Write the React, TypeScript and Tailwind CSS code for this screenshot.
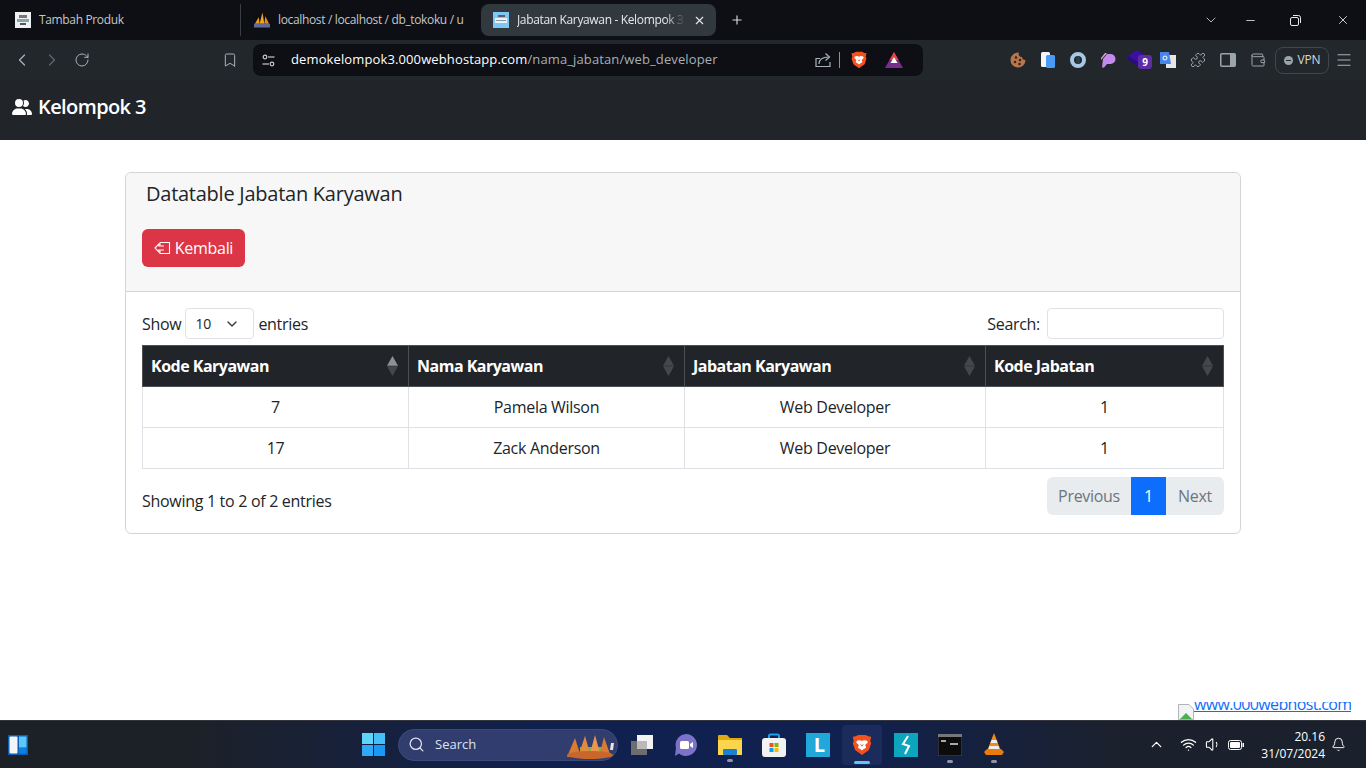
import { ChevronDown, ChevronLeft, ChevronRight, ChevronUp, Minus, Plus, RotateCw, X, Bookmark, Puzzle, Wallet, Menu, Search, Wifi, Volume1, Bell } from 'lucide-react';

const SortIcon = ({ up = false }: { up?: boolean }) => (
    <svg width="11" height="20" viewBox="0 0 11 20" className="absolute right-[10px] top-[10px]">
        <path d="M5.500 0 L11 9.700 H0 Z" fill={up ? '#8f9294' : '#44484c'} />
        <path d="M5.500 20 L11 10.300 H0 Z" fill="#44484c" />
    </svg>
);

const BraveIcon = ({ size = 18 }: { size?: number }) => (
    <svg width={size} height={size} viewBox="0 0 24 24">
        <path d="M5 2.500 L8 1 H16 L19 2.500 L22 3 L21 8 L22 10 L19.500 17.500 L12 23 L4.500 17.500 L2 10 L3 8 L2 3 Z" fill="#f4511e" />
        <path d="M7 7 L10 6.800 L12 7.600 L14 6.800 L17 7 L18.500 9 L15.500 12 L16.500 15 L13.500 16.500 L12 18 L10.500 16.500 L7.500 15 L8.500 12 L5.500 9 Z" fill="#fff" />
        <path d="M10 11 L12 14 L14 11 L12 12 Z" fill="#f4511e" />
    </svg>
);

const FaviconPage = () => (
    <svg width="16" height="16" viewBox="0 0 16 16" className="shrink-0">
        <rect width="16" height="16" fill="#7cc7f5" />
        <rect x="2" y="6" width="12" height="5" fill="#e8f1f7" />
        <rect x="5" y="3" width="7" height="2" fill="#55606c" />
        <rect x="3" y="8" width="10" height="1" fill="#7f99ac" />
    </svg>
);

const FaviconGray = () => (
    <svg width="16" height="16" viewBox="0 0 16 16" className="shrink-0">
        <rect width="16" height="16" fill="#eef0f1" />
        <rect x="4" y="3" width="8" height="3" fill="#777" />
        <rect x="2" y="7" width="12" height="3" fill="#8ba3a8" />
        <rect x="5" y="11" width="6" height="2" fill="#556" />
    </svg>
);

const FaviconPma = () => (
    <svg width="16" height="16" viewBox="0 0 17 16" className="shrink-0">
        <path d="M1 12 L5 5 L6 12 Z" fill="#f29a1d" />
        <path d="M6 12 L9 0 L11 12 Z" fill="#f2a32a" />
        <path d="M11 12 L12 4 L16 12 Z" fill="#e88a14" />
        <rect x="0" y="12" width="17" height="4" fill="#5d6a9a" />
    </svg>
);

const Tabs = () => (
    <div className="flex h-[40px] items-center bg-[#0d0f14] text-[12px] tracking-[-0.35px] text-[#c4c7c9]">
        <div className="flex h-[32px] w-[241px] items-center gap-[8px] border-r border-[#3a3d42] pl-[15px]">
            <FaviconGray />
            <span>Tambah Produk</span>
        </div>
        <div className="flex h-[32px] w-[240px] items-center gap-[8px] overflow-hidden pl-[13px] pr-[14px] whitespace-nowrap">
            <FaviconPma />
            <span>localhost / localhost / db_tokoku / u</span>
        </div>
        <div className="flex h-[32px] w-[235px] items-center gap-[8px] rounded-lg bg-[#32393e] pl-[12px] pr-[10px] text-[#e6e8e9]">
            <FaviconPage />
            <span className="flex-1 overflow-hidden whitespace-nowrap [mask-image:linear-gradient(90deg,#000_88%,transparent)]">Jabatan Karyawan - Kelompok 3</span>
            <X size={13} strokeWidth={2} className="shrink-0" />
        </div>
        <Plus size={14} strokeWidth={2} className="ml-[14px] text-[#d6d8da]" />
        <div className="ml-auto flex items-center text-[#e8e9ea]">
            <ChevronDown size={16} strokeWidth={1.500} className="mr-[25px] text-[#aeb6ba]" />
            <Minus size={13} strokeWidth={1.500} className="mr-[33px]" />
            <svg width="11" height="11" viewBox="0 0 11 11" fill="none" stroke="currentColor" className="mr-[35px]">
                <rect x="0.5" y="2.500" width="8" height="8" rx="1.500" />
                <path d="M3 0.500 H8.500 A2 2 0 0 1 10.500 2.500 V8" />
            </svg>
            <X size={14} strokeWidth={1.500} className="mr-[16px]" />
        </div>
    </div>
);

const Extensions = () => (
    <div className="flex items-center">
        <div className="flex w-[30px] justify-center">
            <svg width="16" height="16" viewBox="0 0 16 16">
                <path d="M9 0.600 A7.500 7.500 0 1 0 15.500 8 A3 3 0 0 1 12 5 A3 3 0 0 1 9 0.600 Z" fill="#b8764d" />
                <circle cx="6" cy="5.500" r="1.300" fill="#3b2315" />
                <circle cx="10" cy="8" r="1.300" fill="#3b2315" />
                <circle cx="5" cy="10" r="1.300" fill="#3b2315" />
                <circle cx="9.500" cy="12" r="1.300" fill="#3b2315" />
            </svg>
        </div>
        <div className="flex w-[30px] justify-center">
            <svg width="14" height="16" viewBox="0 0 14 16">
                <rect x="0" y="0" width="9" height="15" rx="1.500" fill="#f5f6f7" />
                <rect x="5" y="3" width="9" height="13" rx="1.500" fill="#4a9bf5" />
            </svg>
        </div>
        <div className="flex w-[30px] justify-center">
            <svg width="16" height="16" viewBox="0 0 16 16">
                <circle cx="8" cy="8" r="6" fill="none" stroke="#a8c8e4" strokeWidth="4" />
                <ellipse cx="8" cy="8" rx="2" ry="4" fill="#2c3f50" />
            </svg>
        </div>
        <div className="flex w-[30px] justify-center">
            <svg width="15" height="15" viewBox="0 0 15 15">
                <path d="M2 6 L6 1 H9.500 A5 5 0 0 1 9.500 11 H6 L3 14.500 H1 Z" fill="#c58af0" />
                <path d="M0 5 L4 0 H6 L0 7 Z" fill="#f0a0c8" />
            </svg>
        </div>
        <div className="relative flex w-[30px] justify-center">
            <svg width="18" height="16" viewBox="0 0 18 16" className="-mt-[4px] -ml-[2px]">
                <path d="M9 0 L18 6 L9 12 L0 6 Z" fill="#3b0fa0" />
                <path d="M0 6 L9 12 V16 L0 10 Z" fill="#2c0b80" />
            </svg>
            <span className="absolute left-[15px] top-[1px] flex h-[14px] w-[14px] items-center justify-center rounded-[3px] bg-[#5e2ca5] text-[10px] font-bold leading-none text-white">9</span>
        </div>
        <div className="flex w-[30px] justify-center">
            <svg width="16" height="16" viewBox="0 0 16 16">
                <rect x="6" y="3" width="10" height="13" fill="#e6e6e6" />
                <path d="M0 0 H9 L11 12 H0 Z" fill="#4a86e8" />
                <circle cx="5" cy="6" r="2" fill="none" stroke="#fff" strokeWidth="1" />
            </svg>
        </div>
        <div className="flex w-[30px] justify-center text-[#9aa5ab]">
            <Puzzle size={16} strokeWidth={1.500} />
        </div>
        <div className="flex w-[30px] justify-center">
            <svg width="16" height="14" viewBox="0 0 16 14" fill="none">
                <rect x="0.750" y="0.750" width="14.500" height="12.500" rx="1" stroke="#9aa5ab" strokeWidth="1.500" />
                <rect x="10" y="1" width="5" height="12" fill="#9aa5ab" />
            </svg>
        </div>
        <div className="flex w-[30px] justify-center text-[#9aa5ab]">
            <Wallet size={16} strokeWidth={1.500} />
        </div>
    </div>
);

const Toolbar = () => (
    <div className="flex h-[40px] items-center bg-[#22272b] text-[#a9b2b7]">
        <ChevronLeft size={20} strokeWidth={1.500} className="ml-[12px]" />
        <ChevronRight size={20} strokeWidth={1.500} className="ml-[10px] text-[#5f676c]" />
        <RotateCw size={16} strokeWidth={1.500} className="ml-[12px]" />
        <Bookmark size={16} strokeWidth={1.500} className="ml-[132px]" />
        <div className="ml-[15px] flex h-[32px] w-[670px] items-center rounded-lg bg-[#0d0f14] pl-[9px] pr-[20px] text-[13px]">
            <svg width="13" height="13" viewBox="0 0 13 13" fill="none" stroke="#c7cbce" strokeWidth="1.200">
                <circle cx="3" cy="3" r="1.800" />
                <path d="M6 3 H12.500" />
                <circle cx="10" cy="10" r="1.800" />
                <path d="M0.500 10 H7" />
            </svg>
            <span className="ml-[16px] tracking-[0.12px] text-white">demokelompok3.000webhostapp.com<span className="text-[#a7afb4]">/nama_jabatan/web_developer</span></span>
            <svg width="16" height="16" viewBox="0 0 16 16" fill="none" stroke="#a9b2b7" strokeWidth="1.200" className="ml-auto">
                <path d="M15 10 V14.500 H1 V6.500 H5" />
                <path d="M4 12 C4 7.500 7.500 5 13.500 5" />
                <path d="M10.500 1.500 L14.500 5 L10.500 8.500" />
            </svg>
            <div className="ml-[8px] h-[16px] w-px bg-[#8a9297]" />
            <div className="ml-[10px] flex"><BraveIcon /></div>
            <svg width="18" height="16" viewBox="0 0 18 16" className="ml-[17px]">
                <path d="M9 0 L18 16 H0 Z" fill="#7b2d8e" />
                <path d="M9 0 L13.500 8 H4.500 Z" fill="#e2483a" />
                <path d="M9 5 L12.500 11 H5.500 Z" fill="#fff" />
            </svg>
        </div>
        <div className="ml-[80px] flex items-center">
            <Extensions />
        </div>
        <div className="ml-[2px] flex h-[27px] w-[54px] items-center justify-center gap-[5px] rounded-lg border border-[#3f474c] text-[12px] tracking-[-0.2px] text-[#d5d9db]">
            <span className="flex h-[9px] w-[9px] items-center justify-center rounded-full bg-[#9aa5ab]">
                <span className="h-px w-[5px] bg-[#22272b]" />
            </span>
            VPN
        </div>
        <Menu size={18} strokeWidth={1.500} className="ml-[6px]" />
    </div>
);

const Navbar = () => (
    <div className="flex h-[60px] items-center bg-[#212529] pl-[12px] pb-[6px]">
        <svg width="20" height="16" viewBox="0 0 640 512" fill="#fff">
            <path d="M96 128a128 128 0 1 1 256 0A128 128 0 1 1 96 128zM0 482.300C0 383.800 79.800 304 178.300 304h91.400C368.200 304 448 383.800 448 482.300c0 16.400-13.300 29.700-29.700 29.700H29.700C13.300 512 0 498.700 0 482.300zM609.300 512H471.400c5.400-9.400 8.600-20.300 8.600-32v-8c0-60.700-27.100-115.200-69.800-151.800c2.400-.1 4.700-.2 7.100-.2h61.400C567.800 320 640 392.200 640 481.300c0 17-13.800 30.700-30.700 30.700zM432 256c-31 0-59-12.600-79.300-32.900C372.400 196.500 384 163.600 384 128c0-26.800-6.600-52.100-18.300-74.300C384.300 40.100 407.200 32 432 32c61.900 0 112 50.100 112 112s-50.100 112-112 112z" />
        </svg>
        <span className="ml-[6px] text-[20px] font-semibold tracking-[-0.6px] text-white">Kelompok 3</span>
    </div>
);

const rows = [
    { kode: 7, nama: 'Pamela Wilson', jabatan: 'Web Developer', kodeJabatan: 1 },
    { kode: 17, nama: 'Zack Anderson', jabatan: 'Web Developer', kodeJabatan: 1 },
];

const DataCard = () => (
    <div className="mx-auto mt-[32px] w-[1116px] rounded-md border border-[#d3d4d5] text-[16px] tracking-[-0.3px] text-[#212529]">
        <div className="h-[119px] rounded-t-md border-b border-[#d3d4d5] bg-[#f7f7f7] px-[16px]">
            <h5 className="pl-[4px] pt-[9px] text-[20px] leading-[24px] font-medium tracking-[-0.25px]">Datatable Jabatan Karyawan</h5>
            <button className="mt-[23px] flex h-[38px] w-[103px] items-center justify-center gap-[4px] rounded-md bg-[#dc3545] text-white">
                <svg width="17" height="16" viewBox="0 0 17 16" fill="none" stroke="#fff" strokeWidth="1.100">
                    <path d="M6 2.500 H15.500 V13.500 H6 V10.500 M6 5.500 V2.500" />
                    <path d="M10 6 H5 V3.800 L1 8 L5 12.200 V10 H10" />
                </svg>
                Kembali
            </button>
        </div>
        <div className="px-[16px] pt-[16px]">
            <div className="flex h-[31px] items-center justify-between">
                <div className="flex items-center gap-[4px]">
                    <span>Show</span>
                    <div className="flex h-[31px] w-[69px] items-center justify-between rounded border border-[#dee2e6] pl-[9px] pr-[13px] text-[14px]">
                        10
                        <ChevronDown size={16} strokeWidth={2} className="text-[#343a40]" />
                    </div>
                    <span>entries</span>
                </div>
                <div className="flex items-center gap-[7px]">
                    <span>Search:</span>
                    <div className="h-[31px] w-[177px] rounded border border-[#dee2e6] bg-white" />
                </div>
            </div>
            <table className="mt-[6px] w-[1081px] table-fixed border-collapse">
                <thead className="bg-[#212529] text-white">
                    <tr className="h-[41px]">
                        {['Kode Karyawan', 'Nama Karyawan', 'Jabatan Karyawan', 'Kode Jabatan'].map((label, i) => (
                            <th
                                key={label}
                                className={`relative border border-[#4d5154] px-[8px] text-left font-bold tracking-[-0.5px] ${['w-[266px]', 'w-[276px]', 'w-[301px]', 'w-[238px]'][i]}`}
                            >
                                {label}
                                <SortIcon up={i === 0} />
                            </th>
                        ))}
                    </tr>
                </thead>
                <tbody>
                    {rows.map((row) => (
                        <tr key={row.kode} className="h-[41px] text-center">
                            <td className="border border-[#dee2e6]">{row.kode}</td>
                            <td className="border border-[#dee2e6]">{row.nama}</td>
                            <td className="border border-[#dee2e6]">{row.jabatan}</td>
                            <td className="border border-[#dee2e6]">{row.kodeJabatan}</td>
                        </tr>
                    ))}
                </tbody>
            </table>
            <div className="mt-[8px] flex items-start justify-between pb-[18px]">
                <span className="pt-[12px]">Showing 1 to 2 of 2 entries</span>
                <div className="flex h-[38px] overflow-hidden rounded-md text-[#6c757d]">
                    <div className="flex w-[84px] items-center justify-center bg-[#e9ecef]">Previous</div>
                    <div className="flex w-[35px] items-center justify-center bg-[#0d6efd] text-white">1</div>
                    <div className="flex w-[58px] items-center justify-center bg-[#e9ecef]">Next</div>
                </div>
            </div>
        </div>
    </div>
);

const Taskbar = () => (
    <div className="relative flex h-[48px] items-center border-t border-[#33373d] bg-[linear-gradient(90deg,#1c2128_0%,#1c2128_14%,#10204f_40%,#10204f_62%,#1b212c_82%,#1b212c_100%)] text-white">
        <svg width="20" height="20" viewBox="0 0 20 20" className="ml-[8px]">
            <rect width="20" height="20" fill="#0a5fb4" />
            <rect x="1.500" y="1.500" width="8" height="17" rx="1" fill="#f3f5f7" />
            <rect x="11" y="1.500" width="7.500" height="11" fill="#5cc8fa" />
            <rect x="11" y="13" width="7.500" height="5.500" fill="#0f80e0" />
        </svg>
        <svg width="23" height="23" viewBox="0 0 23 23" className="ml-[334px]">
            <rect width="11" height="11" fill="#5ed4fb" />
            <rect x="12" width="11" height="11" fill="#45bffa" />
            <rect y="12" width="11" height="11" fill="#2fa8f7" />
            <rect x="12" y="12" width="11" height="11" fill="#1a98f5" />
        </svg>
        <div className="relative ml-[13px] flex h-[32px] w-[220px] items-center rounded-full border border-[#3c4a7a] bg-[#303d6e] pl-[9px] text-[13px] text-[#dfe3ee]">
            <Search size={17} strokeWidth={1.800} />
            <span className="ml-[10px]">Search</span>
            <svg width="50" height="26" viewBox="0 0 50 26" className="absolute right-[1px] bottom-[1px]">
                <path d="M14 14 H38 V20 H14 Z" fill="#7cb342" />
                <path d="M1 24 L9 5 L15 24 Z" fill="#d97b32" />
                <path d="M12 24 L19 3 L25 24 Z" fill="#e28b3f" />
                <path d="M23 24 L29 2 L35 24 Z" fill="#ea9650" />
                <path d="M33 24 L38 4 L45 24 Z" fill="#d97b32" />
                <ellipse cx="24" cy="22" rx="23" ry="4" fill="#c9672a" />
                <path d="M45 10 L48 10 L47 17 L44 17 Z" fill="#f1e4d2" />
            </svg>
        </div>
        <div className="ml-[2px] flex items-center">
            <div className="flex w-[44px] justify-center">
                <svg width="24" height="22" viewBox="0 0 24 22">
                    <rect x="1" y="7" width="16" height="14" fill="#6d6d6d" />
                    <rect x="7" y="1" width="16" height="14" fill="#f2f2f2" />
                    <rect x="7" y="7" width="10" height="8" fill="#b9b9b9" />
                </svg>
            </div>
            <div className="flex w-[44px] justify-center">
                <svg width="24" height="24" viewBox="0 0 24 24">
                    <path d="M12 1 A11 11 0 1 1 5 20.500 L1 23 L2 15 A11 11 0 0 1 12 1 Z" fill="#7c72c8" />
                    <rect x="6" y="8" width="9" height="8" rx="1.500" fill="#fff" />
                    <path d="M16 11 L19 9 V15 L16 13 Z" fill="#fff" />
                </svg>
            </div>
            <div className="relative flex w-[44px] justify-center">
                <svg width="24" height="22" viewBox="0 0 24 22">
                    <path d="M0 2 A1 1 0 0 1 1 1 H9 L12 4 H24 V21 H0 Z" fill="#e3a712" />
                    <rect y="6" width="24" height="15" fill="#fbd54b" />
                    <rect x="5" y="15" width="14" height="6" rx="1" fill="#1a82d0" />
                </svg>
                <span className="absolute bottom-[-6px] h-[3px] w-[6px] rounded-full bg-[#8f96a6]" />
            </div>
            <div className="flex w-[44px] justify-center">
                <svg width="24" height="24" viewBox="0 0 24 24">
                    <path d="M7 6 V3 A1.500 1.500 0 0 1 8.500 1.500 H15.500 A1.500 1.500 0 0 1 17 3 V6" fill="none" stroke="#1aa4e8" strokeWidth="2" />
                    <rect y="5" width="24" height="19" rx="3" fill="#f2f2f2" />
                    <rect x="7.500" y="10" width="4" height="4" fill="#f25022" />
                    <rect x="12.500" y="10" width="4" height="4" fill="#7fba00" />
                    <rect x="7.500" y="15" width="4" height="4" fill="#00a4ef" />
                    <rect x="12.500" y="15" width="4" height="4" fill="#ffb900" />
                </svg>
            </div>
            <div className="flex w-[44px] justify-center">
                <div className="flex h-[24px] w-[24px] items-center justify-center bg-[#1fa8d8] pl-[3px] text-[20px] leading-none font-bold text-white">L</div>
            </div>
            <div className="flex w-[44px] justify-center">
                <div className="relative flex h-[40px] w-[40px] items-center justify-center rounded bg-[#1b2c5c]">
                    <BraveIcon size={22} />
                    <span className="absolute bottom-[1px] h-[3px] w-[16px] rounded-full bg-[#60c5f5]" />
                </div>
            </div>
            <div className="flex w-[44px] justify-center">
                <div className="flex h-[24px] w-[24px] items-center justify-center bg-[#0da5bd]">
                    <svg width="12" height="20" viewBox="0 0 12 20" fill="none" stroke="#fff" strokeWidth="2">
                        <path d="M8 1 L3 9 L9 11 L5 19" />
                    </svg>
                </div>
            </div>
            <div className="relative flex w-[44px] justify-center">
                <svg width="24" height="22" viewBox="0 0 24 22">
                    <rect width="24" height="22" fill="#0c0c0c" stroke="#555" />
                    <rect width="24" height="3" fill="#777" />
                    <path d="M3 7 H8 M12 10 H20" stroke="#ddd" strokeWidth="1.500" />
                </svg>
                <span className="absolute bottom-[-7px] h-[3px] w-[6px] rounded-full bg-[#8f96a6]" />
            </div>
            <div className="relative flex w-[44px] justify-center">
                <svg width="22" height="24" viewBox="0 0 22 24">
                    <path d="M11 0 L18 18 H4 Z" fill="#f08a1d" />
                    <path d="M8.500 7 H13.500 L14.500 10 H7.500 Z" fill="#eee" />
                    <path d="M6.500 13 H15.500 L16.500 16 H5.500 Z" fill="#eee" />
                    <path d="M1 19 L4 16 H18 L21 19 L19 22 H3 Z" fill="#e87b0e" />
                </svg>
                <span className="absolute bottom-[-6px] h-[3px] w-[6px] rounded-full bg-[#8f96a6]" />
            </div>
        </div>
        <div className="ml-auto flex items-center pr-[20px]">
            <ChevronUp size={17} strokeWidth={1.800} />
            <Wifi size={17} strokeWidth={1.800} className="ml-[15px]" />
            <Volume1 size={17} strokeWidth={1.500} className="ml-[8px]" />
            <svg width="16" height="10" viewBox="0 0 16 10" className="ml-[6px]">
                <rect x="0.500" y="0.500" width="13" height="9" rx="2" fill="none" stroke="#fff" />
                <rect x="2" y="2" width="10" height="6" rx="1" fill="#fff" />
                <rect x="14.500" y="3" width="1.500" height="4" fill="#fff" />
            </svg>
            <div className="ml-[17px] flex flex-col items-end text-[12px] leading-[17px]">
                <span>20.16</span>
                <span>31/07/2024</span>
            </div>
            <Bell size={15} strokeWidth={1.500} className="ml-[6px]" />
        </div>
    </div>
);

const App = () => {
    return (
        <div className="relative flex h-screen w-full flex-col overflow-hidden bg-white font-['Open_Sans','Noto_Sans',sans-serif]">
            <Tabs />
            <Toolbar />
            <Navbar />
            <main className="flex-1">
                <DataCard />
            </main>
            {/* hosting banner is cut off by the taskbar */}
            <div className="absolute bottom-[48px] left-[1178px] flex h-[18px] items-start overflow-hidden">
                <svg width="16" height="16" viewBox="0 0 16 16" className="mt-[2px] shrink-0">
                    <path d="M0.500 0.500 H11 L15.500 5 V15.500 H0.500 Z" fill="#f1f3f4" stroke="#b0b4b8" />
                    <path d="M2 15 L8 9 L14 15 Z" fill="#4caf50" />
                </svg>
                <a className="-mt-[6px] text-[16px] leading-[16px] tracking-[-0.65px] whitespace-nowrap text-[#0d6efd] underline">www.000webhost.com</a>
            </div>
            <Taskbar />
        </div>
    );
};

export default App;
